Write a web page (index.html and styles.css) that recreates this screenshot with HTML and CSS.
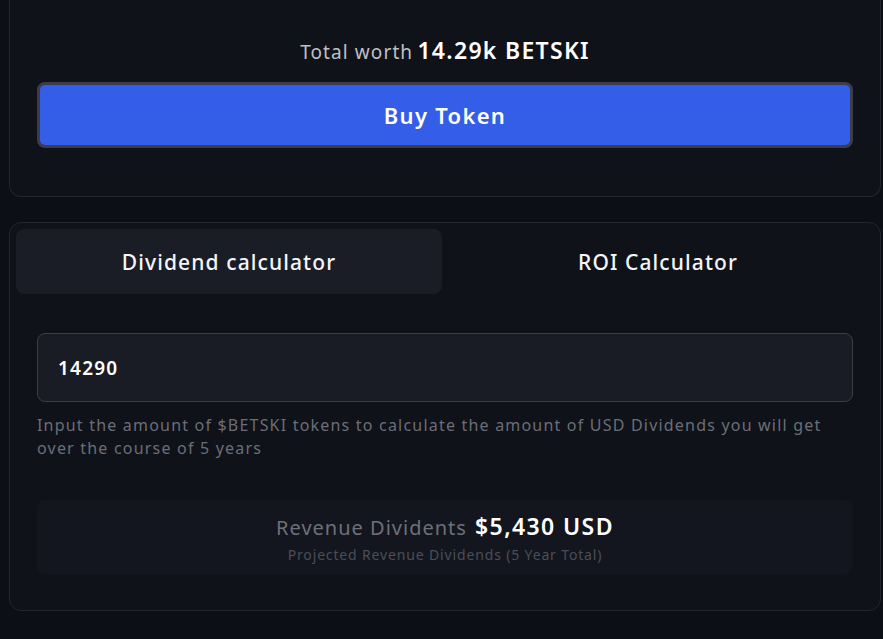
FILE: index.html
```html
<!DOCTYPE html>
<html lang="en">
<head>
<meta charset="utf-8">
<title>BETSKI Calculator</title>
<link rel="stylesheet" href="styles.css">
</head>
<body>
<main class="page">
  <section class="card card-buy">
    <p class="worth"><span class="worth-label">Total worth</span> <span class="worth-value">14.29k BETSKI</span></p>
    <button class="buy-btn" type="button">Buy Token</button>
  </section>

  <section class="card card-calc">
    <div class="tabs">
      <button class="tab tab-active" type="button">Dividend calculator</button>
      <button class="tab" type="button">ROI Calculator</button>
    </div>
    <div class="calc-body">
      <div class="amount-input">14290</div>
      <p class="help">Input the amount of $BETSKI tokens to calculate the amount of USD Dividends you will get over the course of 5 years</p>
      <div class="result">
        <div class="result-line"><span class="result-label">Revenue Dividents</span> <span class="result-value">$5,430 USD</span></div>
        <div class="result-sub">Projected Revenue Dividends (5 Year Total)</div>
      </div>
    </div>
  </section>
</main>
</body>
</html>
```
FILE: styles.css
```css
* { box-sizing: border-box; }
html, body {
  margin: 0;
  padding: 0;
  background: #0c0f16;
  font-family: "Noto Sans", "Open Sans", sans-serif;
  color: #f2f3f5;
}
.page {
  padding: 0 2px 0 9px;
  display: flex;
  flex-direction: column;
  gap: 25px;
}
.card {
  background: #0f1219;
  border: 1px solid #23262f;
  border-radius: 12px;
}
.card-buy {
  border-top: none;
  border-radius: 0 0 12px 12px;
  padding: 36px 27px 48px;
  display: flex;
  flex-direction: column;
  align-items: stretch;
}
.worth {
  margin: 0 0 15px;
  text-align: center;
  line-height: 28px;
}
.worth-label {
  color: #bfc0c5;
  font-size: 19px;
  letter-spacing: 1.1px;
}
.worth-value {
  color: #ffffff;
  font-size: 23px;
  font-weight: 600;
  letter-spacing: 1.3px;
}
.buy-btn {
  height: 66px;
  background: #345de8;
  border: 3px solid #3b3e4a;
  border-radius: 8px;
  color: #ffffff;
  font-family: inherit;
  font-size: 22px;
  font-weight: 600;
  letter-spacing: 1.3px;
  cursor: pointer;
}
.card-calc {
  padding: 6px 6px 36px;
}
.tabs {
  display: grid;
  grid-template-columns: 426px 1fr;
}
.tab {
  height: 65px;
  background: transparent;
  border: none;
  border-radius: 8px;
  color: #f4f5f7;
  font-family: inherit;
  font-size: 21px;
  font-weight: 500;
  letter-spacing: 1.1px;
}
.tab-active {
  background: #1a1d26;
}
.calc-body {
  padding: 39px 21px 0;
  display: flex;
  flex-direction: column;
}
.amount-input {
  height: 69px;
  background: #191c24;
  border: 1px solid #3b3e47;
  border-radius: 8px;
  padding: 0 20px;
  display: flex;
  align-items: center;
  font-size: 19px;
  font-weight: 600;
  letter-spacing: 1.2px;
  color: #ffffff;
}
.help {
  margin: 12px 0 0;
  font-size: 16px;
  line-height: 23px;
  letter-spacing: 1.2px;
  color: #6b6e78;
}
.result {
  margin-top: 40px;
  height: 74px;
  background: #13161e;
  border-radius: 8px;
  display: flex;
  flex-direction: column;
  align-items: center;
  justify-content: center;
  gap: 4px;
}
.result-line {
  line-height: 28px;
}
.result-label {
  font-size: 20px;
  letter-spacing: 1px;
  color: #6e7079;
  margin-right: 4px;
}
.result-value {
  font-size: 23px;
  font-weight: 600;
  letter-spacing: 1.4px;
  color: #ffffff;
}
.result-sub {
  font-size: 14px;
  letter-spacing: 0.85px;
  color: #4b4e58;
  line-height: 16px;
}
```
